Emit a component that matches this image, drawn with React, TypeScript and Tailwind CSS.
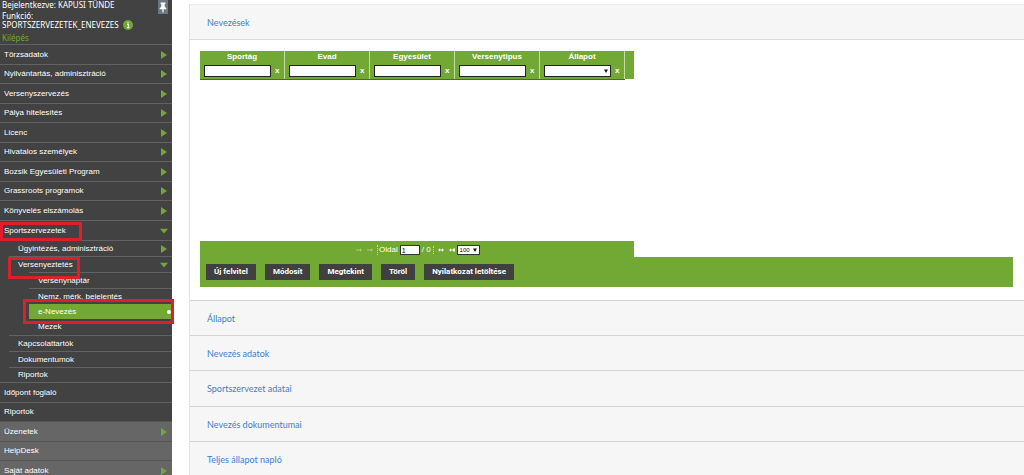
import React from "react";

const mainItems = [
  "Törzsadatok",
  "Nyilvántartás, adminisztráció",
  "Versenyszervezés",
  "Pálya hitelesítés",
  "Licenc",
  "Hivatalos személyek",
  "Bozsik Egyesületi Program",
  "Grassroots programok",
  "Könyvelés elszámolás",
];
const panels = [
  "Állapot",
  "Nevezés adatok",
  "Sportszervezet adatai",
  "Nevezés dokumentumai",
  "Teljes állapot napló",
];
const textFilters = ["Sportág", "Evad", "Egyesület", "Versenytipus"];
const actions = ["Új felvitel", "Módosít", "Megtekint", "Töröl", "Nyilatkozat letöltése"];

function Arrow({ open = false }: { open?: boolean }) {
  return (
    <svg className="h-2 w-2 shrink-0" viewBox="0 0 8 8" aria-hidden="true">
      <path d={open ? "M0 1.8H8L4 6.5Z" : "M1 0V8L7 4Z"} fill="#72a834" />
    </svg>
  );
}

type ItemProps = {
  label: string;
  row: string;
  arrow?: "right" | "down";
  mark?: string;
};

function Item({ label, row, arrow, mark }: ItemProps) {
  return (
    <li className={`relative ${row}`}>
      <a href="#" className="flex h-full items-center justify-between pr-1">
        <span>{label}</span>
        {arrow && <Arrow open={arrow === "down"} />}
      </a>
      {mark && <span className={`pointer-events-none absolute z-10 border-3 border-[#dc1f2a] ${mark}`} />}
    </li>
  );
}

function Sidebar() {
  const line = "border-t border-[#626262]";
  return (
    <aside className="w-[172px] shrink-0 bg-[#424242] text-[8px] leading-none text-white">
      <div className="relative flex h-11 flex-col px-[2px] font-['Noto_Sans',sans-serif] text-[8px] leading-[9px]">
        <div>Bejelentkezve: KAPUSI TÜNDE</div>
        <div className="mt-[2px]">Funkció:</div>
        <div className="flex">
          SPORTSZERVEZETEK_ENEVEZES
          <svg className="ml-1 h-[10px] w-[10px]" viewBox="0 0 10 10" aria-hidden="true">
            <circle cx="5" cy="5" r="5" fill="#72a834" />
            <path d="M5 2V3.2M4 4.4H5.3V7.6M4 7.6H6.4" stroke="#fff" strokeWidth="1.1" fill="none" />
          </svg>
        </div>
        <a href="#" className="mt-[3px] text-[#72a834]">Kilépés</a>
        <button aria-label="Rögzítés" className="absolute top-0 right-1 flex h-[14px] w-[10px] items-center justify-center bg-[#6c7780]">
          <svg className="h-[11px] w-2" viewBox="0 0 8 11" aria-hidden="true">
            <path d="M1.5 0.5H6.5V1.8H5.7V4.5L7.4 6.5V7.2H4.6V10.5H3.4V7.2H0.6V6.5L2.3 4.5V1.8H1.5Z" fill="#fff" />
          </svg>
        </button>
      </div>
      <nav>
        <ul className="*:pl-1">
          {mainItems.map((label) => (
            <Item key={label} label={label} arrow="right" row={`odd:h-5 even:h-[19px] ${line}`} />
          ))}
          <Item label="Sportszervezetek" arrow="down" row={`h-5 ${line}`} mark="top-[1px] left-0 h-[19px] w-[82px]" />
        </ul>
        <ul className="ml-[9px] *:pl-[9px]">
          <Item label="Ügyintézés, adminisztráció" arrow="right" row={`h-4 ${line}`} />
          <Item label="Versenyeztetés" arrow="down" row={`h-4 ${line}`} mark="top-0 left-[-1px] h-[22px] w-[72px]" />
        </ul>
        <ul className="ml-[29px] *:pl-[9px]">
          <Item label="Versenynaptár" row={`h-4 ${line}`} />
          <Item label="Nemz. mérk. bejelentés" row={`h-4 ${line}`} />
          <li className="relative h-[15px] bg-[#72a834]">
            <a href="#" aria-current="page" className="flex h-full items-center justify-between pr-[1px]">
              e-Nevezés
              <span className="h-1 w-1 rounded-full bg-white" />
            </a>
            <span className="pointer-events-none absolute -top-[5px] -right-[2px] -left-[6px] z-10 h-[25px] border-3 border-[#dc1f2a]" />
          </li>
          <Item label="Mezek" row="h-4" />
        </ul>
        <ul className="ml-[9px] *:pl-[9px]">
          <Item label="Kapcsolattartók" row={`h-4 ${line}`} />
          <Item label="Dokumentumok" row={`h-4 ${line}`} />
          <Item label="Riportok" row={`h-[15px] ${line}`} />
        </ul>
        <ul className="*:pl-1">
          <Item label="Időpont foglaló" row={`h-5 ${line}`} />
          <Item label="Riportok" row={`h-[19px] ${line}`} />
        </ul>
        <ul className="bg-[#666] *:border-t *:border-[#555] *:pl-1">
          <Item label="Üzenetek" arrow="right" row="h-5" />
          <Item label="HelpDesk" row="h-[19px]" />
          <Item label="Saját adatok" arrow="right" row="h-5" />
        </ul>
      </nav>
    </aside>
  );
}

function FilterTable() {
  const cell = "border-r border-[#c4dca6] p-0";
  return (
    <div className="flex w-[434px]">
      <table className="w-[425px] table-fixed border-separate border-spacing-0 border-b border-[#4d6a2b] bg-[#72a834] text-[8px] leading-none font-bold text-white">
        <thead>
          <tr>
            {[...textFilters, "Állapot"].map((name) => (
              <th key={name} scope="col" className={`h-3 ${cell}`}>
                {name}
              </th>
            ))}
          </tr>
        </thead>
        <tbody>
          <tr>
            {textFilters.map((name) => (
              <td key={name} className={`h-4 ${cell}`}>
                <div className="flex items-center gap-1 pl-1">
                  <input aria-label={name} className="h-3 w-[67px] border border-[#222] bg-white px-1 font-normal text-black" />
                  <button aria-label={`${name} törlése`}>x</button>
                </div>
              </td>
            ))}
            <td className={`h-4 ${cell}`}>
              <div className="flex items-center gap-1 pl-1">
                <span className="relative flex">
                  <select aria-label="Állapot" className="h-3 w-[67px] appearance-none border border-[#222] bg-white text-black">
                    <option />
                  </select>
                  <svg className="pointer-events-none absolute top-1 right-[3px] h-1 w-1" viewBox="0 0 4 4" aria-hidden="true">
                    <path d="M0 0.5H4L2 4Z" fill="#111" />
                  </svg>
                </span>
                <button aria-label="Állapot törlése">x</button>
              </div>
            </td>
          </tr>
        </tbody>
      </table>
      <div className="mb-[1px] flex-1 bg-[#72a834]" />
    </div>
  );
}

function PageArrows({ back = false }: { back?: boolean }) {
  return (
    <button aria-label={back ? "Előző oldalak" : "Következő oldalak"} className={back ? "opacity-40" : ""}>
      <svg className="h-1 w-[17px]" viewBox="0 0 17 4" aria-hidden="true">
        <path
          d={
            back
              ? "M0 1.5H4V0.3L6 2L4 3.7V2.5H0ZM11 1.5H15V0.3L17 2L15 3.7V2.5H11Z"
              : "M0 2L2 0.3V3.7ZM2 1.5H4V0.3L6 2L4 3.7V2.5H2ZM11 2L13 0.3V3.7ZM13 1.5H15V0.5H17V3.5H15V2.5H13Z"
          }
          fill="#fff"
        />
      </svg>
    </button>
  );
}

function Pager() {
  return (
    <div className="flex h-4 w-[434px] items-center bg-[#72a834] pt-[2px] pl-[156px] text-[8px] leading-none text-white">
      <PageArrows back />
      <label className="ml-1 flex items-center gap-[2px] border-l border-dotted border-white/60 pl-[1px]">
        Oldal
        <input defaultValue="1" className="h-[10px] w-5 border border-[#333] bg-white px-[1px] text-[7px] text-black" />
      </label>
      <span className="ml-[2px] border-r border-dotted border-white/60 pr-[2px]">/ 0</span>
      <span className="ml-1 flex">
        <PageArrows />
      </span>
      <span className="relative ml-[2px] flex">
        <select aria-label="Sorok száma" className="h-[10px] w-[23px] appearance-none border border-[#333] bg-white pl-[2px] text-[6px] leading-none text-black">
          <option>100</option>
        </select>
        <svg className="pointer-events-none absolute top-[3px] right-[3px] h-1 w-1" viewBox="0 0 4 4" aria-hidden="true">
          <path d="M0 0.5H4L2 4Z" fill="#111" />
        </svg>
      </span>
    </div>
  );
}

export default function App() {
  const link = "font-['Lato',sans-serif] text-[9px] leading-none text-[#3d80cf]";
  return (
    <div className="flex h-screen overflow-hidden bg-white font-['Liberation_Sans',Arial,sans-serif]">
      <Sidebar />
      <main className="mt-1 ml-[17px] flex min-w-0 flex-1 flex-col border-l border-[#e2e2e2]">
        <section>
          <h2 className="flex h-9 items-center border-t border-b border-t-[#ececec] border-b-[#dcdcdc] bg-[#f6f6f6] pl-[17px]">
            <a href="#" className={link}>Nevezések</a>
          </h2>
          <div className="pt-[11px] pr-[11px] pb-[13px] pl-[10px]">
            <div className="flex min-h-[206px] flex-col justify-between">
              <FilterTable />
              <Pager />
            </div>
            <div className="flex h-[30px] items-center gap-[9px] bg-[#72a834] pl-[6px] font-['Roboto',sans-serif]">
              {actions.map((a) => (
                <button key={a} className="h-4 bg-[#404040] px-2 text-[8px] leading-none font-bold text-white">
                  {a}
                </button>
              ))}
            </div>
          </div>
        </section>
        {panels.map((p) => (
          <h2 key={p} className="flex h-[35px] shrink-0 items-center border-t border-[#d4d4d4] bg-[#f6f6f6] pl-[17px] nth-4:h-9">
            <a href="#" className={link}>{p}</a>
          </h2>
        ))}
      </main>
    </div>
  );
}
